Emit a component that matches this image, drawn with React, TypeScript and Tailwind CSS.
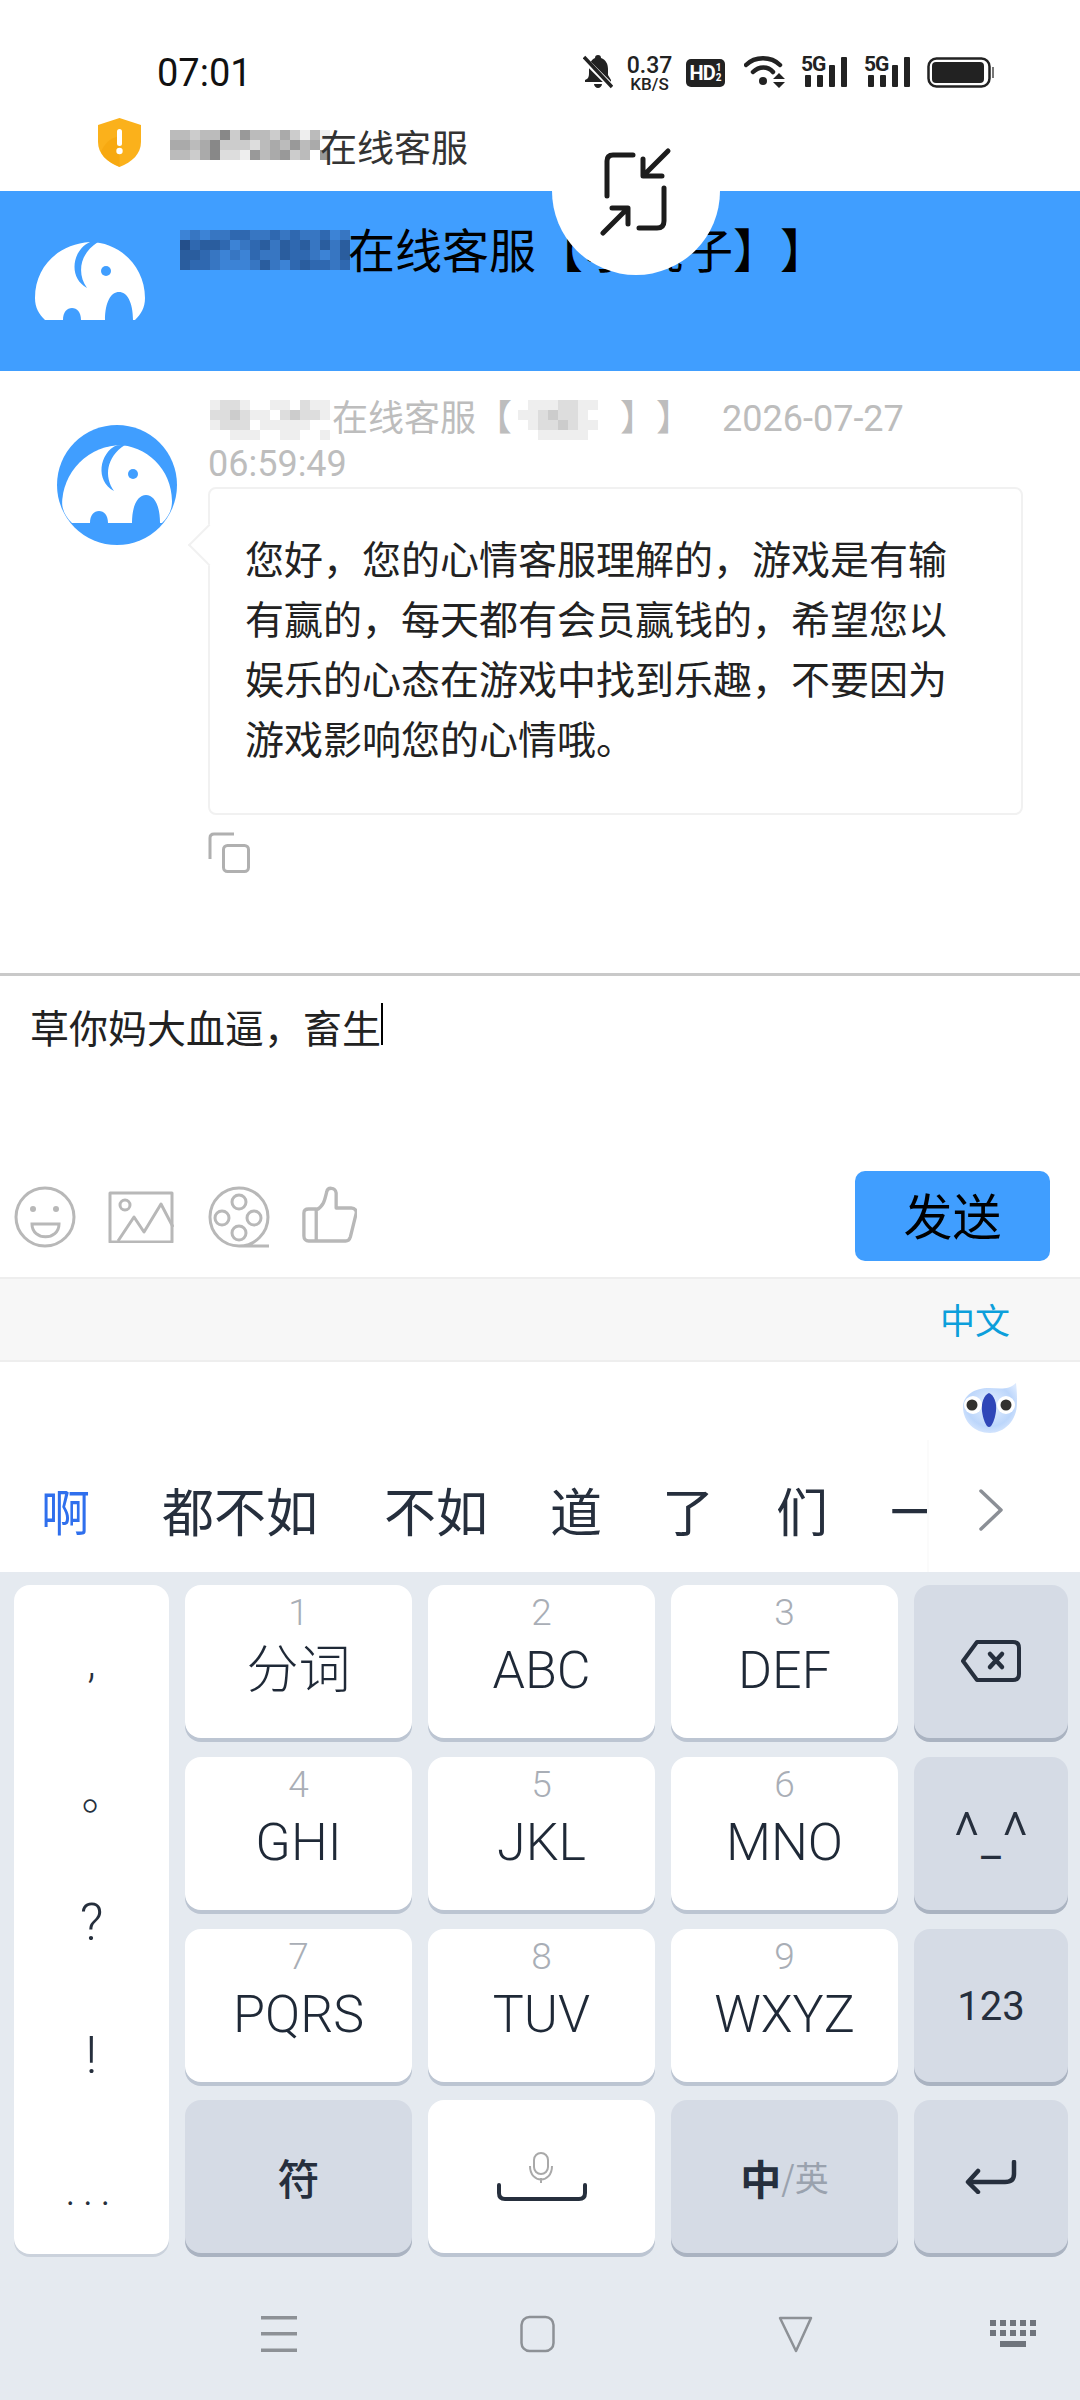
const cjk = "font-['Roboto','Noto_Sans_CJK_SC',sans-serif]";

const Mosaic = ({ rows, size = 10, palette }: { rows: string[]; size?: number; palette?: Record<string, string> }) => {
  const color = (c: string) => (palette ? palette[c] : `#${c}${c}${c}`);
  return (
    <svg
      width={rows[0].length * size}
      height={rows.length * size}
      shapeRendering="crispEdges"
      className="inline-block shrink-0 align-top"
    >
      {rows.map((row, y) =>
        row.split("").map((c, x) => <rect key={`${x}-${y}`} x={x * size} y={y * size} width={size} height={size} fill={color(c)} />),
      )}
    </svg>
  );
};

const bluePalette: Record<string, string> = { a: "#2a5d9e", b: "#2f68b0", c: "#3776c2", d: "#3c83d6", e: "#244f8a" };

const ElephantBody = ({ fill, cut }: { fill: string; cut: string }) => (
  <>
    <path
      fill={fill}
      d="M10 78C4 72 0 66 0 56 0 24 24 2 55 0 84 0 110 24 110 56 110 66 106 72 100 78H98C98 60 92 50 84 50 76 50 70 60 70 78H46C46 70 42 66 37 66 32 66 28 70 28 78Z"
    />
    <path fill={cut} d="M55 0C37 8 33 36 52 46 42 32 44 12 63 0Z" />
    <circle cx="71" cy="29" r="5" fill={cut} />
  </>
);

const Signal = () => (
  <div className="relative w-[46px] h-[32px]">
    <svg width="46" height="32" viewBox="0 0 46 32" className="absolute left-0 top-0">
      <g fill="#222">
        <rect x="4" y="18" width="6" height="12" rx="1" />
        <rect x="16" y="18" width="6" height="12" rx="1" />
        <rect x="28" y="8" width="6" height="22" rx="1" />
        <rect x="40" y="0" width="6" height="30" rx="1" />
      </g>
    </svg>
    <span className="absolute left-0 -top-[2px] text-[21px] leading-[19px] font-bold text-[#222] font-['Roboto'] tracking-[-1px]">5G</span>
  </div>
);

const StatusBar = () => (
  <div className="h-[110px] flex items-start justify-between pl-[157px] pr-[85px] pt-[55px]">
    <span className="text-[38px] leading-[36px] text-[#111] font-['Roboto']">07:01</span>
    <div className="flex items-start">
      <svg width="30" height="34" viewBox="0 0 30 34">
        <path fill="#222" d="M15 0c2 0 3 1 3 3 5 2 7 6 7 11v6l3 5v2H2v-2c3-1 4-3 4-7v-4c0-5 2-9 6-11 0-2 1-3 3-3ZM11 29h8c0 2-2 4-4 4s-4-2-4-4Z" />
        <path stroke="#fff" strokeWidth="6" d="M0 3 30 33" />
        <path stroke="#222" strokeWidth="3.5" d="M1 2 29 32" />
      </svg>
      <div className="w-[47px] ml-[13px] flex flex-col items-center font-['Roboto'] text-[#222]">
        <span className="text-[23px] leading-[22px] font-medium">0.37</span>
        <span className="text-[17px] leading-[15px] font-medium">KB/S</span>
      </div>
      <div className="w-[39px] h-[28px] ml-[13px] mt-[4px] bg-[#222] rounded-[5px] flex items-center justify-center text-white font-['Roboto'] font-bold">
        <span className="text-[20px] leading-[20px] tracking-[-1px]">HD</span>
        <span className="flex flex-col text-[10px] leading-[10px] ml-[1px]">
          <span>1</span>
          <span>2</span>
        </span>
      </div>
      <svg width="41" height="33" viewBox="0 0 41 33" className="ml-[19px]">
        <g fill="none" stroke="#222" strokeWidth="4.5" strokeLinecap="round">
          <path d="M2 10C11 1 27 1 36 10" />
          <path d="M9 17C15 11 24 11 29 17" />
        </g>
        <circle cx="19" cy="26" r="4" fill="#222" />
        <path fill="#222" d="M35 18 41 24H29ZM29 27H41L35 33Z" />
      </svg>
      <div className="ml-[16px] mt-[2px]">
        <Signal />
      </div>
      <div className="ml-[17px] mt-[2px]">
        <Signal />
      </div>
      <svg width="68" height="32" viewBox="0 0 68 32" className="ml-[17px] mt-[2px]">
        <rect x="1.5" y="1.5" width="61" height="28" rx="8" fill="none" stroke="#222" strokeWidth="2.5" />
        <rect x="5" y="5" width="52" height="21" rx="4" fill="#222" />
        <rect x="65" y="10" width="2" height="11" fill="#777" />
      </svg>
    </div>
  </div>
);

const Shield = () => (
  <svg width="43" height="49" viewBox="0 0 43 49">
    <path fill="#fbb11b" d="M21.5 0 43 7v17c0 12-9 20-21.5 25C9 44 0 36 0 24V7Z" />
    <path fill="#f5a30c" d="M21.5 49C13 45 6 41 3 34 6 26 12 20 21.5 18Z" opacity="0.6" />
    <rect x="19" y="11" width="5" height="17" rx="2.5" fill="#fff" />
    <circle cx="21.5" cy="33" r="3.2" fill="#fff" />
  </svg>
);

const SwitchIcon = () => (
  <svg width="72" height="90" viewBox="0 0 72 90" fill="none" stroke="#1c1c1c" strokeWidth="5" strokeLinecap="round" strokeLinejoin="round">
    <path d="M7 50V15Q7 9 13 9H33" />
    <path d="M68 5 45 28M43 13V30H62" />
    <path d="M64 42V75Q64 82 57 82H39" />
    <path d="M3 87 27 63M12 62H28V78" />
  </svg>
);

const CopyIcon = () => (
  <svg width="42" height="41" viewBox="0 0 42 41" fill="none" stroke="#b0b0b0" strokeWidth="3">
    <path d="M26 2H6Q2 2 2 6V27" />
    <rect x="15.5" y="13.5" width="25" height="26" rx="4" />
  </svg>
);

const Toolbar = () => (
  <div className="h-[137px] flex items-start pl-[14px] pr-[30px] pt-[31px]">
    <div className="flex items-start mt-[15px]">
      <svg width="62" height="62" viewBox="0 0 62 62" fill="none" stroke="#b8b8b8" strokeWidth="3">
        <circle cx="31" cy="31" r="29" />
        <circle cx="19" cy="23" r="3" fill="#b8b8b8" stroke="none" />
        <circle cx="42" cy="23" r="3" fill="#b8b8b8" stroke="none" />
        <path d="M18 38H45C45 55 18 55 18 38Z" />
      </svg>
      <svg width="66" height="52" viewBox="0 0 66 52" fill="none" stroke="#b8b8b8" strokeWidth="3" className="ml-[32px] mt-[5px]" strokeLinejoin="round">
        <rect x="2" y="2" width="62" height="49" />
        <circle cx="17" cy="14" r="5" />
        <path d="M10 50 26 26 36 41 53 13 65 36" />
      </svg>
      <svg width="62" height="62" viewBox="0 0 62 62" fill="none" stroke="#b8b8b8" strokeWidth="3" className="ml-[34px]">
        <path d="M31 60A29 29 0 1 1 31 2 29 29 0 0 1 31 60H61" />
        <circle cx="31" cy="16" r="7" />
        <circle cx="14" cy="32" r="7" />
        <circle cx="46" cy="32" r="7" />
        <circle cx="31" cy="47" r="7" />
      </svg>
      <svg width="55" height="58" viewBox="0 0 58 58" preserveAspectRatio="none" fill="none" stroke="#b8b8b8" strokeWidth="3.5" strokeLinejoin="round" className="ml-[32px]">
        <path d="M15 24C23 20 24 14 26 6 27 1 35 1 36 7V22H52C56 22 58 25 57 28L51 51C50 54 48 55 46 55H7C4 55 2 53 2 50V27C2 24 4 23 7 23H15V55" />
      </svg>
    </div>
    <button className="ml-auto w-[195px] h-[90px] rounded-[10px] bg-[#409eff] text-black text-[49px] leading-[85px] pb-[5px] font-['Noto_Sans_CJK_SC']">发送</button>
  </div>
);

const Mascot = () => (
  <svg width="56" height="50" viewBox="0 0 56 50">
    <defs>
      <radialGradient id="body" cx="50%" cy="45%" r="60%">
        <stop offset="0%" stopColor="#e8f1ff" />
        <stop offset="70%" stopColor="#bcd6fb" />
        <stop offset="100%" stopColor="#dbe9fe" />
      </radialGradient>
    </defs>
    <path fill="url(#body)" d="M27 5C36 5 46 8 54 0 55 8 55 14 55 20 55 38 42 50 28 50 12 50 1 38 1 24 1 12 13 5 27 5Z" />
    <circle cx="11" cy="22" r="9" fill="#fff" />
    <circle cx="44" cy="22" r="9" fill="#fff" />
    <circle cx="10" cy="22" r="5.5" fill="#33322f" />
    <circle cx="44" cy="22" r="5.5" fill="#33322f" />
    <path fill="#2f46b8" d="M27 10C32 12 35 20 34 28 33 36 30 44 27 44 24 44 21 36 20 28 19 20 22 12 27 10Z" />
  </svg>
);

const Candidates = () => (
  <div className="h-[210px] bg-white relative">
    <div className="flex justify-end pr-[62px] pt-[21px] h-[71px]">
      <Mascot />
    </div>
    <div className="absolute left-[927px] top-[78px] w-[2px] h-[132px] bg-[#fbfbfb]" />
    <div className="flex items-center h-[90px] mt-[32px] text-[#262f3d] font-['Noto_Sans_CJK_SC'] text-[52px] leading-[60px]">
      <span className="ml-[41px] text-[#2f6fed] text-[49px]">啊</span>
      <span className="ml-[72px]">都不如</span>
      <span className="ml-[66px]">不如</span>
      <span className="ml-[62px]">道</span>
      <span className="ml-[60px]">了</span>
      <span className="ml-[62px]">们</span>
      <span className="ml-[62px] w-[37px] overflow-hidden">一</span>
      <svg width="24" height="42" viewBox="0 0 24 42" fill="none" stroke="#8b8f96" strokeWidth="3.5" strokeLinecap="round" strokeLinejoin="round" className="ml-[52px]">
        <path d="M2 2 22 21 2 40" />
      </svg>
    </div>
  </div>
);

const keyBase = "h-[153px] rounded-[16px] flex flex-col items-center";
const whiteKey = `${keyBase} bg-white shadow-[0_4px_0_#bcc5d2]`;
const grayKey = `${keyBase} justify-center bg-[#d5dbe5] shadow-[0_4px_0_#aab3c1]`;

const LetterKey = ({ n, label }: { n: string; label: string }) => (
  <div className={whiteKey}>
    <span className="mt-[8px] text-[37px] leading-[40px] font-light text-[#a9aeb6] font-['Roboto']">{n}</span>
    <span className={`mt-[8px] text-[52px] leading-[60px] font-light text-[#1f2937] ${cjk}`}>{label}</span>
  </div>
);

const Keyboard = () => (
  <div className="flex-1 bg-[#e5eaf0] flex flex-col">
    <div className="flex pt-[13px] pl-[14px]">
      <div className="w-[155px] h-[669px] rounded-[16px] bg-white shadow-[0_3px_0_#cbd2dc] mr-[16px] flex flex-col items-center text-[#262f3d] font-['Roboto'] text-[44px] leading-[60px] font-light">
        <span className="mt-[47px]">,</span>
        <span className="mt-[69px] font-['Noto_Sans_CJK_SC'] pl-[24px]">。</span>
        <span className="mt-[72px] text-[52px]">?</span>
        <span className="mt-[73px] text-[52px]">!</span>
        <span className="mt-[74px] tracking-[7px]">...</span>
      </div>
      <div className="grid grid-cols-[227px_227px_227px_154px] gap-x-[16px] gap-y-[18px]">
        <LetterKey n="1" label="分词" />
        <LetterKey n="2" label="ABC" />
        <LetterKey n="3" label="DEF" />
        <div className={grayKey}>
          <svg width="60" height="42" viewBox="0 0 60 42" fill="none" stroke="#262f3d" strokeWidth="4" strokeLinejoin="round" strokeLinecap="round" className="-mt-[2px]">
            <path d="M16 2H52Q58 2 58 8V34Q58 40 52 40H16L2 21Z" />
            <path d="M29 14 41 27M41 14 29 27" strokeWidth="4.5" />
          </svg>
        </div>
        <LetterKey n="4" label="GHI" />
        <LetterKey n="5" label="JKL" />
        <LetterKey n="6" label="MNO" />
        <div className={`${grayKey} text-[#262f3d] font-['Roboto'] font-light`}>
          <div className="flex items-start h-[70px] mt-[14px] text-[64px] leading-[64px]">
            <span>^</span>
            <span className="text-[44px] leading-[72px] font-normal mx-[1px]">_</span>
            <span>^</span>
          </div>
        </div>
        <LetterKey n="7" label="PQRS" />
        <LetterKey n="8" label="TUV" />
        <LetterKey n="9" label="WXYZ" />
        <div className={`${grayKey} text-[40px] leading-[50px] text-[#262f3d] font-['Roboto']`}>
          <span className="mt-[4px]">123</span>
        </div>
        <div className={`${grayKey} text-[#262f3d] font-['Noto_Sans_CJK_SC'] text-[42px] leading-[50px] font-medium`}>符</div>
        <div className={`${whiteKey} justify-center`}>
          <svg width="90" height="50" viewBox="0 0 90 50" fill="none">
            <rect x="37" y="1" width="14" height="21" rx="7" stroke="#a9a9a9" strokeWidth="2" />
            <path d="M33 14C33 32 55 32 55 14M44 26V31" stroke="#a9a9a9" strokeWidth="2" />
            <path d="M2 33V41Q2 47 8 47H82Q88 47 88 41V33" stroke="#262f3d" strokeWidth="4" strokeLinecap="round" />
          </svg>
        </div>
        <div className={grayKey}>
          <div className="flex items-center font-['Noto_Sans_CJK_SC'] leading-[50px]">
            <span className="text-[41px] font-bold text-[#262f3d]">中</span>
            <span className="text-[34px] text-[#9aa2ae]">/英</span>
          </div>
        </div>
        <div className={grayKey}>
          <svg width="52" height="34" viewBox="0 0 52 34" fill="none" stroke="#262f3d" strokeWidth="4.5" strokeLinecap="round" strokeLinejoin="round">
            <path d="M49 2V14Q49 22 40 22H4" />
            <path d="M13 11 3 22 13 32" />
          </svg>
        </div>
      </div>
    </div>
    <div className="flex items-center pl-[261px] mt-[61px]">
      <svg width="36" height="38" viewBox="0 0 36 38" fill="#8d9196">
        <rect width="36" height="3.5" y="1" />
        <rect width="36" height="3.5" y="17" />
        <rect width="36" height="3.5" y="33.5" />
      </svg>
      <svg width="36" height="38" viewBox="0 0 36 38" fill="none" stroke="#8d9196" strokeWidth="2.5" className="ml-[223px]">
        <rect x="1.5" y="2" width="32" height="34" rx="8" />
      </svg>
      <svg width="36" height="38" viewBox="0 0 36 38" fill="none" stroke="#8d9196" strokeWidth="2.5" strokeLinejoin="round" className="ml-[222px]">
        <path d="M2 3H33L18 36Z" />
      </svg>
      <svg width="46" height="28" viewBox="0 0 46 28" fill="#6f747c" className="ml-[176px]">
        <path d="M0 0h6v6H0zM10 0h6v6h-6zM20 0h6v6h-6zM30 0h6v6h-6zM40 0h6v6h-6zM0 10h6v6H0zM10 10h6v6h-6zM20 10h6v6h-6zM30 10h6v6h-6zM40 10h6v6h-6zM10 21h26v6H10z" />
      </svg>
    </div>
  </div>
);

export default function App() {
  return (
    <div className="w-[1080px] h-[2400px] bg-white relative overflow-hidden flex flex-col [text-spacing-trim:space-all] font-['Noto_Sans_CJK_SC',sans-serif]">
      <StatusBar />
      <div className="h-[81px] flex pl-[98px] pt-[8px] relative">
        <Shield />
        <div className="ml-[29px] mt-[12px]">
          <Mosaic rows={["bbcbb8c9bbcacebe", "aaba8cccdbab9baf", "bbca8dde9ba9cbf9"]} />
        </div>
        <span className="-ml-[10px] mt-[6px] text-[37px] leading-[44px] text-[#333]">在线客服</span>
      </div>

      <div className="h-[180px] bg-[#409eff] flex pl-[35px] relative">
        <svg width="110" height="78" viewBox="0 0 110 78" className="mt-[51px]">
          <ElephantBody fill="#fff" cut="#409eff" />
        </svg>
        <div className="ml-[35px] mt-[39px]">
          <Mosaic
            palette={bluePalette}
            rows={["dcdccbbccbcbccbdc", "ebaabdcbacabacaca", "aabcdcdbccabbcdca", "abbcdddcacdbabbcb"]}
          />
        </div>
        <span className="-ml-[2px] mt-[29px] text-[47px] leading-[56px] text-black whitespace-nowrap">
          在线客服<span className="tracking-[3px]">【小桃</span>子】】
        </span>
      </div>

      {/* round shortcut sitting on the header edge */}
      <div className="absolute left-[552px] top-[107px] w-[168px] h-[168px] rounded-full bg-white flex items-center justify-center">
        <SwitchIcon />
      </div>

      <div className="h-[602px] pt-[27px] pl-[57px] flex items-start">
        <svg width="120" height="120" viewBox="0 0 120 120" className="mt-[27px] mr-[31px] shrink-0">
          <clipPath id="avatarClip">
            <circle cx="60" cy="60" r="60" />
          </clipPath>
          <circle cx="60" cy="60" r="60" fill="#409eff" />
          <g clipPath="url(#avatarClip)" transform="translate(5 20)">
            <ElephantBody fill="#fff" cut="#409eff" />
          </g>
        </svg>
        <div className="w-[815px]">
          <div className={`text-[36px] leading-[43px] text-[#bdbdbd] ${cjk}`}>
            <div className="flex items-start">
              <span className="mt-[2px] ml-[2px] mr-[2px]">
                <Mosaic rows={["eddeffeefdee", "ddcdeefdcdde", "edddfeeeeeff", "ffeeeffeeffe"]} />
              </span>
              <span>在线客服【</span>
              <span className="mt-[2px] ml-[6px] mr-[12px]">
                <Mosaic rows={["feeeddeef", "eedcddeff", "feddcdeef", "ffeeeeeff"]} />
              </span>
              <span>】】</span>
              <span className="ml-[30px]">2026-07-27</span>
            </div>
            <div>06:59:49</div>
          </div>
          <div className="relative mt-[1px] h-[328px] border-2 border-[#f1f1f1] rounded-[8px] pt-[38px] pl-[35px] pr-[44px] text-[39px] leading-[60px] text-[#222]">
            <div className="absolute -left-[16px] top-[41px] w-[30px] h-[30px] rotate-45 bg-white border-l-2 border-b-2 border-[#f1f1f1]" />
            <span className="relative">您好，您的心情客服理解的，游戏是有输有赢的，每天都有会员赢钱的，希望您以娱乐的心态在游戏中找到乐趣，不要因为游戏影响您的心情哦。</span>
          </div>
          <div className="mt-[17px]">
            <CopyIcon />
          </div>
        </div>
      </div>

      <div className="h-[3px] bg-[#c9c9c9]" />

      <div className="h-[164px] pl-[30px] pt-[27px] flex items-start text-[39px] leading-[46px] text-[#222]">
        <span>草你妈大血逼，畜生</span>
        <span className="w-[2px] h-[42px] bg-black" />
      </div>

      <Toolbar />

      <div className="h-[85px] bg-[#f7f7f7] border-y-2 border-[#eeeeee] flex items-center justify-end pr-[70px] text-[35px] text-[#0c9fdb]">中文</div>

      <Candidates />
      <Keyboard />
    </div>
  );
}
